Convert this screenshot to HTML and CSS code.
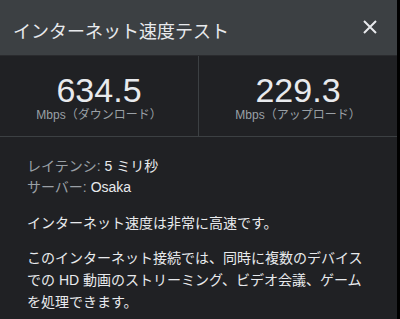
FILE: index.html
```html
<!DOCTYPE html>
<html lang="ja">

<head>
    <meta charset="UTF-8">
    <meta name="viewport" content="width=device-width, initial-scale=1.0">
    <title>インターネット速度テスト</title>
    <link rel="stylesheet" href="styles.css">
</head>

<body>
    <div class="panel">
        <div class="header">
            <span class="title">インターネット速度テスト</span>
            <button class="close" type="button" aria-label="閉じる">
                <svg width="14" height="14" viewBox="0 0 14 14">
                    <path d="M1 1 L13 13 M13 1 L1 13" stroke="#e8eaed" stroke-width="2" fill="none"/>
                </svg>
            </button>
        </div>

        <div class="stats">
            <div class="stat">
                <div class="value">634.5</div>
                <div class="unit">Mbps（ダウンロード）</div>
            </div>
            <div class="stat">
                <div class="value">229.3</div>
                <div class="unit">Mbps（アップロード）</div>
            </div>
        </div>

        <div class="info">
            <div class="details">
                <div><span class="label">レイテンシ:</span> 5 ミリ秒</div>
                <div><span class="label">サーバー:</span> Osaka</div>
            </div>
            <p>インターネット速度は非常に高速です。</p>
            <p>このインターネット接続では、同時に複数のデバイスでの HD 動画のストリーミング、ビデオ会議、ゲームを処理できます。</p>
        </div>
    </div>
</body>

</html>
```

FILE: styles.css
```css
body {
    margin: 0;
    padding: 0;
    background-color: #000;
    font-family: "Liberation Sans", Arial, "Noto Sans CJK JP", sans-serif;
    color: #e8eaed;
}

.panel {
    width: 397px;
    height: 319px;
    background-color: #202124;
    overflow: hidden;
}

.header {
    height: 56px;
    background-color: #3c4043;
    border-bottom: 1px solid #2a2b2e;
    box-sizing: border-box;
    display: flex;
    align-items: center;
    justify-content: space-between;
    padding: 0 20px 2px 13px;
}

.title {
    font-size: 18px;
    color: #e8eaed;
    padding-top: 6px;
}

.close {
    background: none;
    border: none;
    padding: 0;
    width: 14px;
    height: 14px;
    display: flex;
    cursor: pointer;
}

.stats {
    display: flex;
    height: 80px;
    border-bottom: 1px solid #3c4043;
}

.stat {
    flex: 1;
    display: flex;
    flex-direction: column;
    align-items: center;
    padding-top: 14px;
}

.stat:first-child {
    border-right: 1px solid #3c4043;
}

.value {
    font-size: 34px;
    line-height: 40px;
    color: #e8eaed;
}

.unit {
    font-size: 12px;
    line-height: 14px;
    color: #9aa0a6;
    margin-top: -2px;
}

.info {
    padding: 19px 27px 0 27px;
    font-size: 14px;
    line-height: 21px;
}

.label {
    color: #9aa0a6;
}

.info p {
    margin: 15px 0 0 0;
}

.info p + p {
    margin-top: 13px;
    line-height: 22px;
}
```
